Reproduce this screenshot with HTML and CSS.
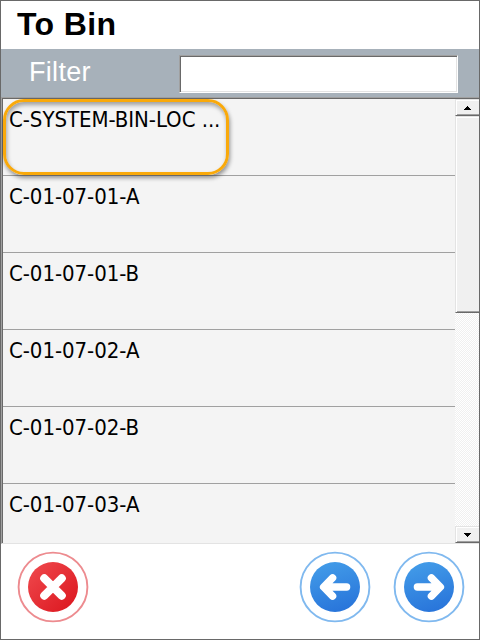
FILE: index.html
```html
<!DOCTYPE html>
<html lang="en">
<head>
<meta charset="utf-8">
<title>To Bin</title>
<link rel="stylesheet" href="styles.css">
</head>
<body>
<main class="window">
  <header class="title">To Bin</header>
  <section class="filter">
    <label class="filter-label" for="filter">Filter</label>
    <input class="filter-input" id="filter" type="text">
  </section>
  <section class="list">
    <div class="rows">
      <div class="row">C-SYSTEM-BIN-LOC ...</div>
      <div class="row">C-01-07-01-A</div>
      <div class="row">C-01-07-01-B</div>
      <div class="row">C-01-07-02-A</div>
      <div class="row">C-01-07-02-B</div>
      <div class="row">C-01-07-03-A</div>
    </div>
    <div class="scrollbar">
      <div class="scroll-button"><svg width="7" height="4" shape-rendering="crispEdges"><path d="M3 0h1v1h1v1h1v1h1v1H0V3h1V2h1V1h1z"/></svg></div>
      <div class="thumb"></div>
      <div class="track"></div>
      <div class="scroll-button"><svg width="7" height="4" shape-rendering="crispEdges"><path d="M0 0h7v1H6v1H5v1H4v1H3V3H2V2H1V1H0z"/></svg></div>
    </div>
    <div class="highlight"></div>
  </section>
  <footer class="actions">
    <svg class="action" viewBox="0 0 72 72">
      <defs><linearGradient id="red" x1="0" y1="0" x2="1" y2="1"><stop offset=".1" stop-color="#ee454a"/><stop offset=".9" stop-color="#dd1a22"/></linearGradient></defs>
      <circle cx="36" cy="36" r="34.4" fill="#fff" stroke="#ed8b8f" stroke-width="1.9"/>
      <circle cx="36" cy="36" r="25" fill="url(#red)"/>
      <path d="M27.3 27.3l17.4 17.4M44.7 27.3L27.3 44.7" stroke="#fff" stroke-width="8.2" stroke-linecap="round"/>
    </svg>
    <svg class="action back" viewBox="0 0 72 72">
      <defs><linearGradient id="blue" x1=".35" y1="0" x2=".65" y2="1"><stop offset="0" stop-color="#429be8"/><stop offset="1" stop-color="#2874da"/></linearGradient></defs>
      <circle cx="36" cy="36" r="34.4" fill="#fff" stroke="#80b9ef" stroke-width="1.9"/>
      <circle cx="36" cy="36" r="25" fill="url(#blue)"/>
      <path d="M47.6 36H25M33.6 26.8L24.6 36l9 9.2" fill="none" stroke="#fff" stroke-width="7.4" stroke-linecap="round" stroke-linejoin="round"/>
    </svg>
    <svg class="action next" viewBox="0 0 72 72">
      <circle cx="36" cy="36" r="34.4" fill="#fff" stroke="#80b9ef" stroke-width="1.9"/>
      <circle cx="36" cy="36" r="25" fill="url(#blue)"/>
      <path d="M24.4 36H47M38.4 26.8l9 9.2-9 9.2" fill="none" stroke="#fff" stroke-width="7.4" stroke-linecap="round" stroke-linejoin="round"/>
    </svg>
  </footer>
</main>
</body>
</html>
```
FILE: styles.css
```css
* { box-sizing: border-box; }
body { margin: 0; }
.window {
  width: 480px;
  height: 640px;
  display: flex;
  flex-direction: column;
  border: 1px solid #696969;
  background: #fff;
  overflow: hidden;
}
.title {
  height: 48px;
  padding-left: 16px;
  font: bold 32px/46px "Liberation Sans", Arial, sans-serif;
  letter-spacing: .4px;
  color: #000;
}
.filter {
  height: 48px;
  display: flex;
  align-items: flex-start;
  background: #a7b1ba;
}
.filter-label {
  width: 178px;
  padding-left: 28px;
  font: 27px/46px "Liberation Sans", Arial, sans-serif;
  letter-spacing: .3px;
  color: #fff;
}
.filter-input {
  width: 279px;
  height: 38px;
  margin-top: 6px;
  border: 1px solid;
  border-color: #a0a0a0 #fff #fff #a0a0a0;
  border-radius: 0;
  box-shadow: inset 1px 1px #696969, inset -1px -1px #e3e3e3;
  background: #fff;
  outline: 0;
}
.list {
  position: relative;
  height: 447px;
  display: flex;
  border-top: 1px solid #a0a0a0;
  border-left: 1px solid #a0a0a0;
  border-bottom: 1px solid #e3e3e3;
  box-shadow: inset 1px 1px #696969;
  padding: 1px 0 0 1px;
  background: #f4f4f4;
}
.rows {
  width: 452px;
  overflow: hidden;
}
.row {
  height: 77px;
  padding-left: 6px;
  border-bottom: 1px solid #a0a0a0;
  font: 22px/41px "DejaVu Sans Condensed", "DejaVu Sans", sans-serif;
  font-stretch: condensed;
  letter-spacing: -.05px;
  color: #000;
  white-space: nowrap;
}
.row:last-child { border-bottom: 0; }
.scrollbar {
  width: 24px;
  display: flex;
  flex-direction: column;
}
.scroll-button, .thumb {
  flex: none;
  border: 1px solid;
  border-color: #e3e3e3 transparent #696969 #e3e3e3;
  border-right: 0;
  box-shadow: inset 1px 1px #fff, inset 0 -1px #a0a0a0;
  background: #f0f0f0;
}
.scroll-button {
  height: 17px;
  display: flex;
  align-items: center;
  justify-content: center;
}
.thumb { height: 197px; }
.track {
  flex: 1;
  background: repeating-conic-gradient(#f0f0f0 0 25%, #fff 0 50%) 0 0 / 2px 2px;
}
.highlight {
  position: absolute;
  left: 1px;
  top: 1px;
  width: 226px;
  height: 76px;
  border: 3px solid #f9a90a;
  border-radius: 21px;
  box-shadow: 1px 3px 4px rgba(0, 0, 0, .4), inset 1px 3px 4px rgba(0, 0, 0, .35);
}
.actions {
  flex: 1;
  display: flex;
  align-items: flex-start;
  padding: 7px 14px 0 16px;
}
.action { width: 72px; height: 72px; }
.back { margin-left: auto; }
.next { margin-left: 22px; }
```
